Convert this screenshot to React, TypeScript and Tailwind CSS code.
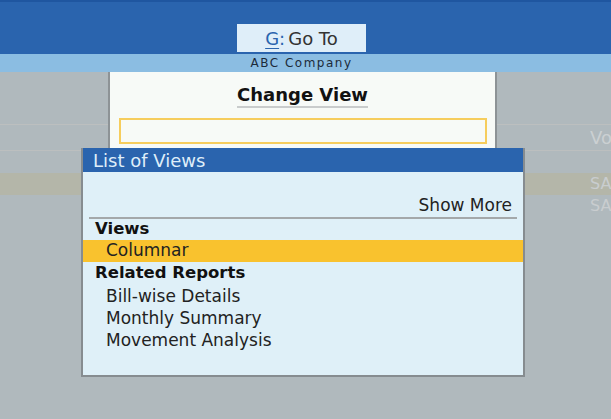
import React from "react";

const font = { fontFamily: '"DejaVu Sans", "Liberation Sans", sans-serif' };

export default function App() {
  return (
    <div className="relative w-[611px] h-[419px] overflow-hidden bg-[#b0b9bd]" style={font}>
      {/* Top bar */}
      <div className="h-[54px] bg-[#2a64ae] border-t-2 border-[#1f56a0] flex items-end justify-center pr-[8px] pb-[2px]">
        <div className="w-[129px] h-[28px] bg-[#dfeef9] flex items-center justify-center text-[18px] text-[#333]">
          <span className="text-[#2a64ae]"><span className="underline underline-offset-[3px]">G</span>:</span>
          <span className="ml-[3px]">Go To</span>
        </div>
      </div>
      <div className="h-[18px] bg-[#8bbde2] flex items-center justify-center pr-[8px] text-[12px] tracking-[1.5px] text-[#1c2a3a]">
        ABC Company
      </div>
      {/* Background report rows */}
      <div className="flex flex-col">
        <div className="h-[52px]" />
        <div className="h-px bg-[#bcbfbf]" />
        <div className="h-[25px] flex items-center justify-end text-[18px] text-[#cbd0d2]">
          <span className="w-[21px] overflow-hidden">Vo</span>
        </div>
        <div className="h-px bg-[#bcbfbf]" />
        <div className="h-[22px]" />
        <div className="h-[22px] bg-[#b4b6a9] flex items-center justify-end text-[16px] text-[#c9cdcf]">
          <span className="w-[21px] overflow-hidden">SA</span>
        </div>
        <div className="h-[22px] flex items-center justify-end text-[16px] text-[#c9cdcf]">
          <span className="w-[21px] overflow-hidden">SA</span>
        </div>
      </div>

      {/* Change View dialog */}
      <div className="absolute left-[108px] top-[72px] w-[389px] h-[77px] bg-[#f7faf7] border-x-2 border-[#8d9396] flex flex-col items-center">
        <div className="mt-[13px] text-[18px] font-bold text-[#111] border-b-2 border-[#c9cccc] leading-[20px] pb-[1px]">
          Change View
        </div>
        <div className="mt-[10px] w-[368px] h-[26px] border-2 border-[#f6cd5d] bg-[#f7faf7]" />
      </div>

      {/* List of Views */}
      <div className="absolute left-[81px] top-[148px] w-[444px] h-[229px] bg-[#dff0f8] border-2 border-t-0 border-[#868c90] flex flex-col">
        <div className="h-[24px] bg-[#2a64ae] text-[#dfeef9] text-[18px] flex items-center pl-[10px]">
          List of Views
        </div>
        <div className="h-[23px]" />
        <div className="h-[22px] flex items-center justify-end pr-[11px] text-[17px] text-[#222]">Show More</div>
        <div className="mx-[6px] h-[2px] bg-[#a4a8aa]" />
        <div className="h-[21px] flex items-center pl-[12px] text-[16.5px] font-bold text-[#111]">Views</div>
        <div className="h-[22px] flex items-center pl-[23px] text-[17px] text-[#222] bg-[#f9c22e]">Columnar</div>
        <div className="h-[23px] flex items-center pl-[12px] text-[16.5px] font-bold text-[#111]">Related Reports</div>
        <div className="h-[23px] flex items-center pl-[23px] text-[17px] text-[#222]">Bill-wise Details</div>
        <div className="h-[22px] flex items-center pl-[23px] text-[17px] text-[#222]">Monthly Summary</div>
        <div className="h-[22px] flex items-center pl-[23px] text-[17px] text-[#222]">Movement Analysis</div>
      </div>
    </div>
  );
}
